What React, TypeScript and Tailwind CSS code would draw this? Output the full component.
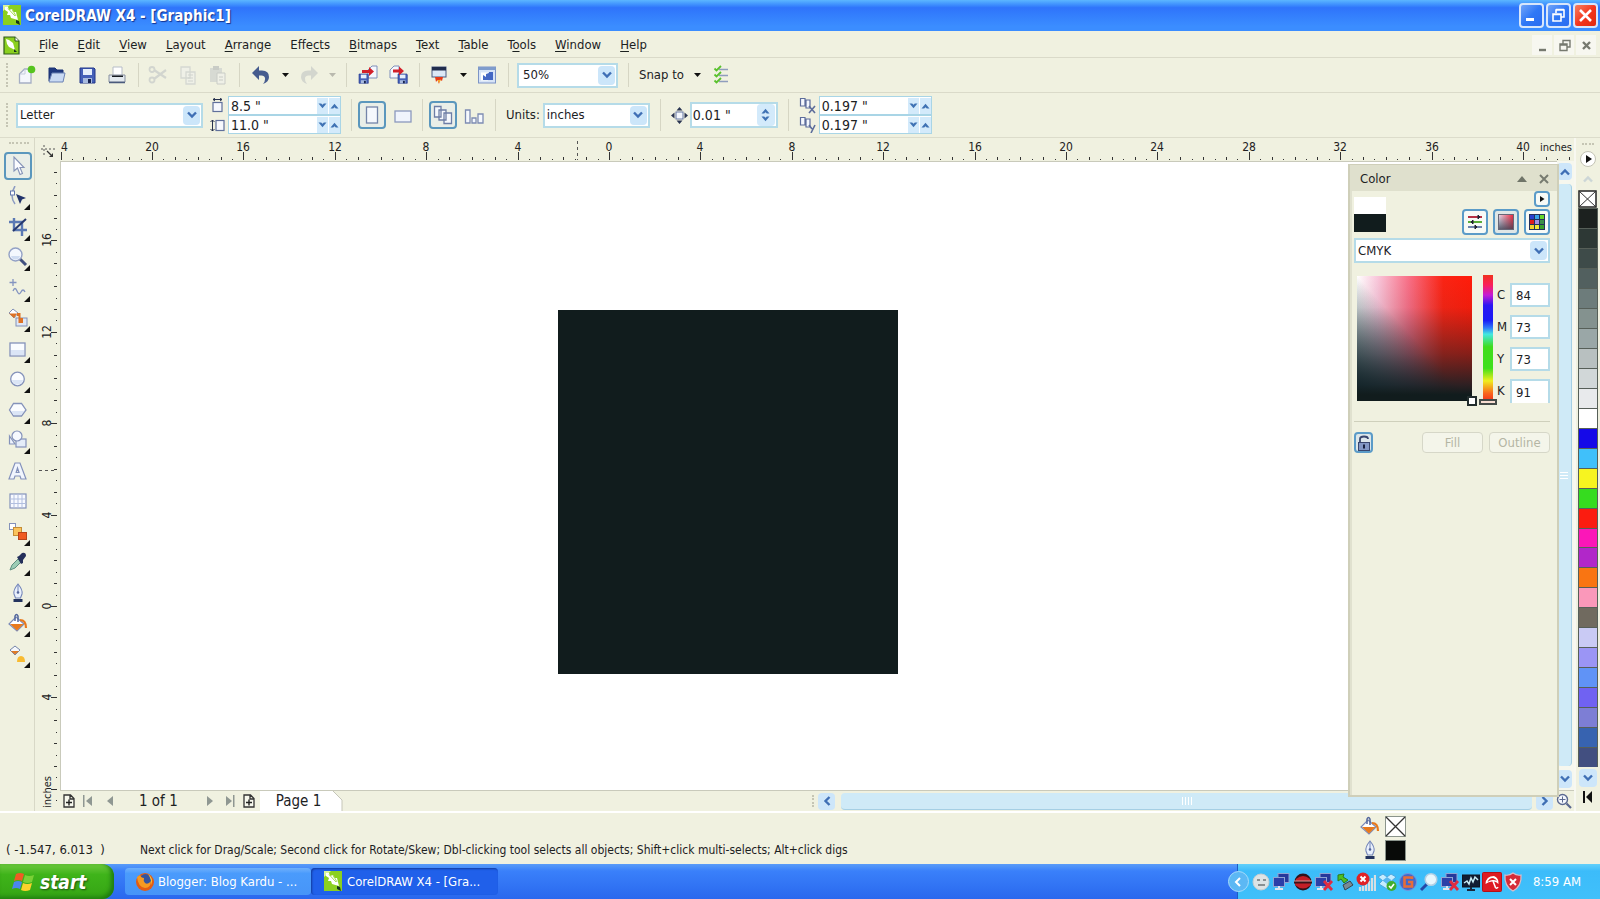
import React from "react";

type Kids = { children?: React.ReactNode };

/* ---------- small shared pieces ---------- */

function Icon({ w = 20, h = 20, children, className = "" }: Kids & { w?: number; h?: number; className?: string }) {
  return (
    <svg width={w} height={h} viewBox={`0 0 ${w} ${h}`} className={`block shrink-0 ${className}`} aria-hidden="true">
      {children}
    </svg>
  );
}

function Chevron({ up = false, small = false }: { up?: boolean; small?: boolean }) {
  if (small) {
    return (
      <Icon w={9} h={6}>
        <path d={up ? "M0.5 5.5 L4.5 0.8 L8.5 5.5 L5.8 5.5 L4.5 4.2 L3.2 5.5Z" : "M0.5 0.5 L4.5 5.2 L8.5 0.5 L5.8 0.5 L4.5 1.8 L3.2 0.5Z"} fill="#3f72b4" />
      </Icon>
    );
  }
  return (
    <Icon w={12} h={8}>
      <path d={up ? "M2 6.5 L6 2.5 L10 6.5" : "M2 1.5 L6 5.5 L10 1.5"} fill="none" stroke="#3f6fb5" strokeWidth="2.4" />
    </Icon>
  );
}

function Grip() {
  return <div className="mr-1 ml-1 h-6 w-0 shrink-0 border-l-2 border-dotted border-[#c5c5b4]" />;
}

function Sep({ tall = false }: { tall?: boolean }) {
  return <div className={`${tall ? "h-8" : "h-6"} w-px shrink-0 bg-[#d6d6c4]`} />;
}

function ToolButton({ label, className = "w-[30px]", disabled = false, children }: Kids & { label: string; className?: string; disabled?: boolean }) {
  return (
    <button aria-label={label} disabled={disabled} className={`flex h-7 shrink-0 items-center justify-center ${className}`}>
      {children}
    </button>
  );
}

function Combo({ label, value, options, className, pad = "pl-1" }: { label: string; value: string; options: string[]; className: string; pad?: string }) {
  return (
    <div className={`flex h-[25px] shrink-0 items-center border-2 border-[#b5dbe8] bg-white pr-px ${className}`}>
      <select aria-label={label} defaultValue={value} className={`min-w-0 flex-1 appearance-none bg-transparent outline-none ${pad}`}>
        {options.map((o) => (
          <option key={o}>{o}</option>
        ))}
      </select>
      <span className="flex h-[19px] w-[17px] items-center justify-center rounded-sm bg-[#cce6fa]">
        <Chevron />
      </span>
    </div>
  );
}

function SpinRow({ label, value }: { label: string; value: string }) {
  return (
    <div className="flex h-[19px] items-center border border-[#a9d5e6] bg-white">
      <input aria-label={label} defaultValue={value} className="w-0 min-w-0 flex-1 bg-transparent pl-0.5 text-[14px] outline-none" />
      <button aria-label={`${label} down`} className="mr-px flex h-4 w-[11px] items-center justify-center bg-[#d3eafb]">
        <Chevron small />
      </button>
      <button aria-label={`${label} up`} className="flex h-4 w-[11px] items-center justify-center bg-[#d3eafb]">
        <Chevron small up />
      </button>
    </div>
  );
}

function Triangle({ faint = false }: { faint?: boolean }) {
  return (
    <Icon w={7} h={4}>
      <path d="M0 0 H7 L3.5 4Z" fill={faint ? "#b9b9ae" : "#111"} />
    </Icon>
  );
}

function CorelLogo() {
  return (
    <Icon w={20} h={21}>
      <rect x="1" y="0" width="18" height="20" fill="#8bd01f" />
      <path d="M1 0 H8 L1 6Z" fill="#d9f59b" />
      <path d="M3 2 L6 2 L7 5 L10 4 L11 7 L14 7 L16 15 L9 13 L8 10 L5 10 L6 7 L3 5Z" fill="#fff" />
      <path d="M6 3.5 L13 11 M10 4 L14 11" stroke="#a9dd55" strokeWidth="1" />
      <path d="M14 15 L17 16 L18 20 L14 18Z" fill="#16351a" />
    </Icon>
  );
}

/* ---------- toolbar drawings ---------- */

const pageStroke = "#7f8fba";

function BucketShape() {
  return (
    <>
      <path d="M8 4 L16 11 L9 18 L1 11Z" fill="#fff" stroke="#7c8bb8" strokeWidth="1.2" />
      <path d="M2 11 H15.5 L9 17.5Z" fill="#e8791c" />
      <path d="M7 8 V3 Q8.500 0 10 3 V9" fill="none" stroke="#51659c" strokeWidth="1.5" />
      <path d="M12 7 Q18 7 18 15" fill="none" stroke="#e8791c" strokeWidth="2.2" />
    </>
  );
}

function PenShape() {
  return (
    <>
      <path d="M10 1 Q15 7 14 11 L12.500 15 H7.500 L6 11 Q5 7 10 1Z" fill="#e9f0fc" stroke="#7385b8" strokeWidth="1.1" />
      <path d="M10 2 V9" stroke="#7385b8" />
      <circle cx="10" cy="9.500" r="1.300" fill="#53659b" />
      <path d="M5.500 16 H14.500 V19 H5.500Z" fill="#24345f" />
    </>
  );
}

const Undo = ({ faint = false }: { faint?: boolean }) => (
  <Icon w={20} h={20}>
    <g transform={faint ? "translate(20 0) scale(-1 1)" : undefined}>
      <path d="M1 8 L8 1 V5.500 H11 Q18 5.500 18 12 Q18 17 12 19 Q14.500 16 14 13 Q13.500 10.500 10.500 10.500 H8 V15Z" fill={faint ? "#d3d6ce" : "#465c8e"} />
    </g>
  </Icon>
);

const Floppy = ({ x = 0, y = 0, s = 1 }: { x?: number; y?: number; s?: number }) => (
  <g transform={`translate(${x} ${y}) scale(${s})`}>
    <path d="M0 0 H14 L15 1 V15 H0Z" fill="#4560b8" stroke="#22368a" />
    <rect x="3" y="1" width="9" height="6" fill="#e6effb" />
    <rect x="3" y="10" width="9" height="5" fill="#a9bbdf" />
    <rect x="8" y="11" width="3" height="4" fill="#16224f" />
  </g>
);

function StandardBar() {
  return (
    <div className="flex h-[35px] items-center border-b border-[#dadac9] pl-0.5">
      <Grip />
      <ToolButton label="New">
        <Icon>
          <path d="M2.500 18 V9 L7.500 4 H14 V18Z" fill="#f4f7fc" stroke="#a5aec4" strokeWidth="1.300" />
          <path d="M3 9 H8 V4.500" fill="none" stroke="#c5ccdc" />
          <circle cx="14.500" cy="4.500" r="3.800" fill="#56c41f" />
        </Icon>
      </ToolButton>
      <ToolButton label="Open">
        <Icon>
          <path d="M2 16 V3 H8 L10 5 H16 V8" fill="#1f3a80" stroke="#1c3274" />
          <path d="M2 17 L5 8 H18 L16 17Z" fill="#c9daf3" stroke="#6b82b4" />
        </Icon>
      </ToolButton>
      <ToolButton label="Save">
        <Icon>
          <Floppy x={3} y={3} />
        </Icon>
      </ToolButton>
      <ToolButton label="Print">
        <Icon>
          <path d="M6 11 V2 H15 V11" fill="#fff" stroke="#b7bdc8" />
          <path d="M2 10 H18 V17 H2Z" fill="#e3e9ee" stroke="#8890a0" />
          <path d="M5 10.500 H16 V12 H5Z" fill="#171c22" />
          <path d="M2 17.500 H18" stroke="#4a5a7c" strokeWidth="1.500" />
        </Icon>
      </ToolButton>
      <div className="w-1.5" />
      <Sep />
      <div className="w-1" />
      <ToolButton label="Cut" disabled>
        <Icon>
          <path d="M6 5 L18 13 M6 14 L18 5" stroke="#d2d5cf" strokeWidth="2.200" />
          <circle cx="4" cy="4.500" r="2.500" fill="none" stroke="#d2d5cf" strokeWidth="1.800" />
          <circle cx="4" cy="15" r="2.500" fill="none" stroke="#d2d5cf" strokeWidth="1.800" />
        </Icon>
      </ToolButton>
      <ToolButton label="Copy" disabled>
        <Icon>
          <path d="M3 2 H12 V13 H3Z M8 7 H17 V19 H8Z" fill="#eff0e7" stroke="#d5d8d2" strokeWidth="1.300" />
          <path d="M10 10 H15 M10 13 H15 M10 16 H15" stroke="#d0d3cd" />
        </Icon>
      </ToolButton>
      <ToolButton label="Paste" disabled>
        <Icon>
          <path d="M2 3 H14 V17 H2Z" fill="#d7dad3" />
          <path d="M5 1 H11 V5 H5Z" fill="#c9ccc6" />
          <path d="M9 8 H17 V19 H9Z" fill="#eff0e7" stroke="#c9ccc6" />
          <path d="M11 12 H15 M11 15 H15" stroke="#c9ccc6" />
        </Icon>
      </ToolButton>
      <div className="w-1.5" />
      <Sep />
      <div className="w-1.5" />
      <ToolButton label="Undo">
        <Undo />
      </ToolButton>
      <ToolButton label="Undo list" className="w-[18px]">
        <Triangle />
      </ToolButton>
      <ToolButton label="Redo" disabled>
        <Undo faint />
      </ToolButton>
      <ToolButton label="Redo list" className="w-4" disabled>
        <Triangle faint />
      </ToolButton>
      <div className="w-1.5" />
      <Sep />
      <div className="w-1.5" />
      <ToolButton label="Import">
        <Icon>
          <path d="M10 5 L14 1 H19 V13 H10Z" fill="#f4f7fd" stroke={pageStroke} />
          <Floppy x={1} y={9} s={0.62} />
          <path d="M4 8 V5 H11 V2 L16 6.500 L11 11 V8Z" fill="#d3202a" />
        </Icon>
      </ToolButton>
      <ToolButton label="Export">
        <Icon>
          <path d="M2 5 L6 1 H11 V13 H2Z" fill="#f4f7fd" stroke={pageStroke} />
          <Floppy x={10} y={9} s={0.62} />
          <path d="M5 7.500 V4.500 H11 V1.500 L16 6 L11 10.500 V7.500Z" fill="#d3202a" />
        </Icon>
      </ToolButton>
      <div className="w-1.5" />
      <Sep />
      <div className="w-1" />
      <ToolButton label="Application launcher">
        <Icon>
          <rect x="3" y="2" width="14" height="10" fill="#dce8f6" stroke="#4b5a82" />
          <rect x="3" y="2" width="14" height="3.500" fill="#202c4d" />
          <path d="M6 12 H14 L13 16 L11 14.500 L10 19 L8.500 15 L7 17Z" fill="#e63a17" />
          <path d="M8.500 15 H12 L10 18Z" fill="#f7a82a" />
        </Icon>
      </ToolButton>
      <ToolButton label="Launcher list" className="w-[18px]">
        <Triangle />
      </ToolButton>
      <ToolButton label="Welcome screen">
        <Icon>
          <rect x="1.500" y="2" width="17" height="16" fill="#d7e4f7" stroke="#7c94c6" />
          <rect x="1.500" y="2" width="17" height="3" fill="#7f9ccc" />
          <rect x="4" y="7.500" width="7" height="8" fill="#fff" />
          <path d="M6 14 V10 L9 12 V9 L12 8 V7 H16 V15 H6Z" fill="#4468c4" />
        </Icon>
      </ToolButton>
      <div className="w-1.5" />
      <Sep />
      <Combo label="Zoom level" value="50%" options={["50%", "100%", "200%"]} className="ml-2 w-[101px]" />
      <div className="w-2.5" />
      <Sep />
      <button className="ml-2.5 flex items-center gap-2.5">
        Snap to
        <Triangle />
      </button>
      <ToolButton label="Options" className="ml-1.5 w-7">
        <Icon w={16}>
          <path d="M6 4.500 H15 M6 10.500 H15 M6 16.500 H15" stroke="#8f9dbd" strokeWidth="1.400" />
          <path d="M1.500 3.500 L3.500 5.500 L8 1 M1.500 9.500 L3.500 11.500 L8 7 M1.500 15.500 L3.500 17.500 L8 13" fill="none" stroke="#59c12c" strokeWidth="1.800" />
        </Icon>
      </ToolButton>
    </div>
  );
}

const pressed = "rounded border-2 border-[#5b97bd] bg-[#e9eee8]";

function PropertyBar() {
  return (
    <div className="flex h-[45px] items-center border-b border-[#dcdccb] pl-0.5">
      <Grip />
      <Combo label="Paper type" value="Letter" options={["Letter", "Legal", "A4"]} className="ml-1 w-[187px]" pad="pl-0.5" />
      <div className="ml-1.5 flex w-[17px] shrink-0 flex-col items-center gap-1.5">
        <Icon w={15} h={15}>
          <path d="M3 1.500 H12 M3 1.500 l2 -1.500 M3 1.500 l2 1.500 M12 1.500 l-2 -1.500 M12 1.500 l-2 1.500" stroke="#26314e" />
          <rect x="3" y="4.500" width="9" height="9" fill="#f6f8fd" stroke="#60709b" strokeWidth="1.200" />
        </Icon>
        <Icon w={15} h={13}>
          <path d="M2.500 1 V12 M0.500 3 L2.500 1 L4.500 3 M0.500 10 L2.500 12 L4.500 10" fill="none" stroke="#26314e" />
          <rect x="6" y="1.500" width="8" height="10" fill="#f6f8fd" stroke="#60709b" strokeWidth="1.200" />
        </Icon>
      </div>
      <div className="ml-0.5 flex w-[113px] shrink-0 flex-col">
        <SpinRow label="Page width" value={'8.5 "'} />
        <SpinRow label="Page height" value={'11.0 "'} />
      </div>
      <div className="w-2.5" />
      <Sep tall />
      <ToolButton label="Portrait" className={`ml-1.5 w-7 ${pressed}`}>
        <Icon>
          <rect x="4.500" y="2" width="11" height="16" fill="#f5f8fd" stroke="#7484a9" strokeWidth="1.300" />
        </Icon>
      </ToolButton>
      <ToolButton label="Landscape" className="ml-0.5 w-[30px]">
        <Icon>
          <rect x="2" y="6" width="16" height="11" fill="#f0f4fc" stroke="#8b99bd" strokeWidth="1.300" />
        </Icon>
      </ToolButton>
      <div className="w-1" />
      <Sep tall />
      <ToolButton label="All pages" className={`ml-1.5 w-7 ${pressed}`}>
        <Icon>
          <path d="M1.500 1.500 H8 V12 H1.500Z M6 5 H13 V15 H6Z M11 8 H18.500 V18.500 H11Z" fill="#f5f8fd" stroke="#6d7da6" strokeWidth="1.300" />
        </Icon>
      </ToolButton>
      <ToolButton label="Current page" className="ml-0.5 w-[30px]">
        <Icon>
          <path d="M1.500 5 H6 V18 H1.500Z M8 13 H12 V18 H8Z M14 9 H19 V18 H14Z" fill="#f5f8fd" stroke="#7d8cb3" strokeWidth="1.300" />
        </Icon>
      </ToolButton>
      <div className="w-1.5" />
      <Sep tall />
      <label className="ml-2.5 flex items-center gap-[3px]">
        Units:
        <Combo label="Units" value="inches" options={["inches", "points", "millimeters"]} className="w-[107px]" pad="pl-0.5" />
      </label>
      <div className="w-2.5" />
      <Sep tall />
      <Icon w={17} h={17} className="ml-2.5">
        <path d="M8.500 0 L11.500 3.500 H5.500Z M8.500 17 L11.500 13.500 H5.500Z M0 8.500 L3.500 5.500 V11.500Z M17 8.500 L13.500 5.500 V11.500Z" fill="#2a3552" />
        <rect x="5" y="5" width="7" height="7" fill="#f4f7fd" stroke="#6576a2" />
      </Icon>
      <div className="ml-0.5 flex h-[26px] w-[88px] shrink-0 items-center border-2 border-[#b5dbe8] bg-white">
        <input aria-label="Nudge distance" defaultValue={'0.01 "'} className="w-0 min-w-0 flex-1 bg-transparent pl-px text-[14px] outline-none" />
        <span className="mr-px flex h-[22px] w-[18px] flex-col items-center justify-between rounded-sm bg-[#d3eafb] py-1">
          <button aria-label="Increase nudge">
            <Chevron small up />
          </button>
          <button aria-label="Decrease nudge">
            <Chevron small />
          </button>
        </span>
      </div>
      <div className="w-2.5" />
      <Sep tall />
      <div className="ml-2.5 flex w-5 shrink-0 flex-col gap-0.5">
        {["X", "Y"].map((axis) => (
          <Icon key={axis} w={18} h={17}>
            <path d="M1.500 1.500 H6 V9 H1.500Z M7 3 H11 V11 H7Z" fill="#f5f8fd" stroke="#5d6d9b" strokeWidth="1.200" />
            <path d={axis === "X" ? "M10 9 L16 16 M16 9 L10 16" : "M10 9 L13 13 M16 9 L12 17"} stroke="#5d6d9b" strokeWidth="1.600" />
          </Icon>
        ))}
      </div>
      <div className="flex w-[113px] shrink-0 flex-col">
        <SpinRow label="Duplicate X" value={'0.197 "'} />
        <SpinRow label="Duplicate Y" value={'0.197 "'} />
      </div>
    </div>
  );
}

/* ---------- title and menu ---------- */

function WindowButton({ label, close = false, children }: Kids & { label: string; close?: boolean }) {
  return (
    <button
      aria-label={label}
      className={`flex h-[25px] w-[25px] items-center justify-center rounded border-2 border-[#d7e6fb] ${
        close ? "bg-linear-to-br from-[#f47c5e] via-[#f4351c] to-[#e02a10]" : "bg-linear-to-br from-[#6fa3f8] via-[#2f78f6] to-[#2b6cf0]"
      }`}
    >
      <Icon w={17} h={17}>
        {children}
      </Icon>
    </button>
  );
}

function TitleBar() {
  return (
    <header className="flex h-[31px] items-center bg-linear-to-b from-[#5cb6ff] via-[#2f74fb] via-25% to-[#3b8dff] to-85% pr-0.5 pl-0.5">
      <CorelLogo />
      <h1 className="ml-[3px] flex-1 text-[15px] font-bold text-white [text-shadow:1px_1px_1px_#12328f]">CorelDRAW X4 - [Graphic1]</h1>
      <div className="flex gap-0.5">
        <WindowButton label="Minimize">
          <path d="M3 12.500 H11" stroke="#fff" strokeWidth="3" />
        </WindowButton>
        <WindowButton label="Restore">
          <path d="M6 6 V3 H14 V10 H11 M6 2.500 H14" fill="none" stroke="#fff" strokeWidth="1.600" />
          <path d="M3 7 H11 V14 H3Z M3 7.500 H11" fill="none" stroke="#fff" strokeWidth="1.600" />
        </WindowButton>
        <WindowButton label="Close" close>
          <path d="M3 3 L14 14 M14 3 L3 14" stroke="#fff" strokeWidth="2.600" />
        </WindowButton>
      </div>
    </header>
  );
}

const menus: [string, string, string][] = [
  ["", "F", "ile"],
  ["", "E", "dit"],
  ["", "V", "iew"],
  ["", "L", "ayout"],
  ["", "A", "rrange"],
  ["Effe", "c", "ts"],
  ["", "B", "itmaps"],
  ["", "T", "ext"],
  ["", "T", "able"],
  ["T", "o", "ols"],
  ["", "W", "indow"],
  ["", "H", "elp"],
];

function MenuBar() {
  return (
    <nav className="flex h-[27px] items-center border-b border-[#dadac9] pt-0.5 pr-1 pl-[3px]">
      <Icon w={17} h={19}>
        <path d="M1 1 H12 L16 5 V18 H1Z" fill="#8bd01f" stroke="#2f5a1c" strokeWidth="1.200" />
        <path d="M12 1 V5 H16" fill="#fff" stroke="#2f5a1c" />
        <path d="M3 3 L6 4 L10 7 L12 14 L6 11 L4 8Z" fill="#fff" />
        <path d="M11 13 L14 16 L11 16Z" fill="#16351a" />
      </Icon>
      <div className="ml-[9px] flex flex-1">
        {menus.map(([pre, key, post]) => (
          <button key={pre + key + post} className="pr-[9px] pl-2.5">
            {pre}
            <span className="underline underline-offset-2">{key}</span>
            {post}
          </button>
        ))}
      </div>
      <div className="flex gap-0.5">
        {["M5 13 H12", "M7 7 V3.500 H14 V10 H11 M4 7 H11 V13.500 H4Z M4 8 H11", "M5 5 L12 12 M12 5 L5 12"].map((d, i) => (
          <button key={d} aria-label={["Minimize document", "Restore document", "Close document"][i]} className="flex h-5 w-5 items-center justify-center bg-[#f7f7f0]">
            <Icon w={17} h={17}>
              <path d={d} fill="none" stroke="#76796f" strokeWidth={i === 1 ? 1.4 : 2.4} />
            </Icon>
          </button>
        ))}
      </div>
    </nav>
  );
}

/* ---------- toolbox ---------- */

const tools: { name: string; flyout?: boolean; art: React.ReactNode }[] = [
  { name: "Pick", art: <path d="M6 1 V15 L9.500 12 L12 18.500 L14.500 17.500 L12 11.500 H16Z" fill="#fbfcff" stroke="#8593b7" strokeWidth="1.100" /> },
  {
    name: "Shape",
    flyout: true,
    art: (
      <>
        <path d="M7 0 Q1 10 7 18" fill="none" stroke="#8c9bc2" strokeWidth="1.500" />
        <rect x="2.500" y="5" width="4" height="4" fill="#fff" stroke="#6478ad" />
        <path d="M8 8 L18 12 L14 13.500 L12 18Z" fill="#22336b" />
      </>
    ),
  },
  {
    name: "Crop",
    flyout: true,
    art: (
      <>
        <path d="M6 1 V13 H19 M1 5 H14 V19" fill="none" stroke="#5b79b4" strokeWidth="2.400" />
        <path d="M18 2 L5 14" stroke="#26386f" strokeWidth="2" />
      </>
    ),
  },
  {
    name: "Zoom",
    flyout: true,
    art: (
      <>
        <path d="M12 12 L18 18" stroke="#43527f" strokeWidth="3" />
        <circle cx="7.500" cy="7.500" r="6.500" fill="#f4f8fe" stroke="#93a1c5" strokeWidth="1.400" />
        <path d="M3 9 H12 Q11 12.500 7.500 12.500 Q4 12.500 3 9Z" fill="#cfdcf1" />
      </>
    ),
  },
  {
    name: "Freehand",
    flyout: true,
    art: <path d="M5 1 V8 M1.500 4.500 H8.500 M5 13 Q7 8 9 13 T13 14 T17 14" fill="none" stroke="#8494c0" strokeWidth="1.300" />,
  },
  {
    name: "Smart fill",
    flyout: true,
    art: (
      <>
        <rect x="8" y="10" width="11" height="8" fill="#dfe7f5" stroke="#8291b8" />
        <path d="M5 1 L10 5 L6 10 L1 5Z" fill="#fff" stroke="#8291b8" />
        <path d="M1 5.500 H9 L6 10Z M9 5 H12.500 V10 H15 V15 H10.500 V8 H9Z" fill="#dd7224" />
      </>
    ),
  },
  { name: "Rectangle", flyout: true, art: <><rect x="2" y="4" width="15" height="13" fill="#fafcff" stroke="#8492ba" strokeWidth="1.300" /><rect x="3" y="11" width="13" height="5" fill="#dbe5f6" /></> },
  { name: "Ellipse", flyout: true, art: <><circle cx="9.500" cy="10" r="6.800" fill="#fafcff" stroke="#8492ba" strokeWidth="1.300" /><path d="M4 11 H15 Q14 15.500 9.500 15.500 Q5 15.500 4 11Z" fill="#dbe5f6" /></> },
  { name: "Polygon", flyout: true, art: <><path d="M5.500 3.500 H13.500 L18 10 L13.500 16 H5.500 L1.500 10Z" fill="#fafcff" stroke="#8492ba" strokeWidth="1.300" /><path d="M3 11 H16.500 L13 15 H6Z" fill="#dbe5f6" /></> },
  {
    name: "Basic shapes",
    flyout: true,
    art: (
      <>
        <path d="M1.500 6 L7 14 H1.500Z" fill="#eef3fc" stroke="#8492ba" strokeWidth="1.200" />
        <rect x="8" y="9" width="10" height="8" fill="#e4ecf9" stroke="#8492ba" strokeWidth="1.200" />
        <circle cx="9" cy="6" r="5" fill="#f6f9fe" stroke="#8492ba" strokeWidth="1.200" />
      </>
    ),
  },
  { name: "Text", art: <path fillRule="evenodd" d="M7 2 H12 L18 18 H13 L12 15 H7 L6 18 H1Z M9.500 7 L8.200 11.500 H11Z" fill="#f1f5fd" stroke="#8391bb" strokeWidth="1.200" /> },
  {
    name: "Table",
    art: (
      <>
        <rect x="2" y="3" width="16" height="14" fill="#f8faff" stroke="#8492ba" strokeWidth="1.200" />
        <path d="M6 3 V17 M10 3 V17 M14 3 V17 M2 8 H18 M2 12.500 H18" stroke="#b2bfdf" />
      </>
    ),
  },
  {
    name: "Interactive blend",
    flyout: true,
    art: (
      <>
        <rect x="1.500" y="1.500" width="6" height="6" fill="#fff" stroke="#8492ba" />
        <rect x="5.500" y="5.500" width="8" height="8" fill="#fac35c" stroke="#c58d35" />
        <rect x="10.500" y="10.500" width="8" height="7" fill="#ef5a22" stroke="#b8431a" />
      </>
    ),
  },
  {
    name: "Eyedropper",
    flyout: true,
    art: (
      <>
        <path d="M2 18 L4 13 L10 7 L13 10 L7 16Z" fill="#9dcdb5" stroke="#5e8f80" />
        <path d="M9 5 L11 4 L14 1 Q18 0 18 4 L15 8 V11 L13 12Z" fill="#242f5a" />
      </>
    ),
  },
  { name: "Outline", flyout: true, art: <PenShape /> },
  { name: "Fill", flyout: true, art: <BucketShape /> },
  {
    name: "Interactive fill",
    flyout: true,
    art: (
      <>
        <path d="M7 2 L12 6 L7 11 L2 6Z" fill="#f4f7fc" stroke="#7585aa" />
        <path d="M3 7 H11 L7 10.500Z" fill="#df7a25" />
        <path d="M9 18 Q9 12 13 12 Q17 12 17 18Z" fill="#f8bb32" />
      </>
    ),
  },
];

function Toolbox() {
  return (
    <aside className="flex w-[35px] shrink-0 flex-col border-r border-[#d8d8c7] pl-1">
      <div className="mx-auto mt-1 mb-2 h-0 w-5 border-t-2 border-dotted border-[#c5c5b4]" />
      {tools.map((t, i) => (
        <div key={t.name} className={`flex h-7 shrink-0 items-center ${i % 2 ? "mb-[3px]" : "mb-0.5"}`}>
          <button aria-label={t.name} className={`relative flex h-7 w-7 items-center justify-center ${i === 0 ? pressed : ""}`}>
            <Icon>{t.art}</Icon>
            {t.flyout && (
              <svg width="6" height="6" viewBox="0 0 6 6" className="absolute right-0.5 bottom-0">
                <path d="M6 0 V6 H0Z" fill="#111" />
              </svg>
            )}
          </button>
        </div>
      ))}
    </aside>
  );
}

/* ---------- rulers ---------- */

const UNIT = 91.4 / 8;

function HorizontalRuler() {
  const origin = 549;
  const ticks = [];
  for (let i = -48; i <= 84; i++) {
    const x = Math.round(origin + i * UNIT);
    const len = i % 8 === 0 ? 8 : i % 2 === 0 ? 3 : 1;
    ticks.push(<rect key={i} x={x} y={22 - len} width="1" height={len} fill="#333" />);
  }
  const labels = [];
  for (let v = -20; v <= 40; v += 4) {
    labels.push(
      <text key={v} x={Math.round(origin + v * UNIT * 2)} y="13" textAnchor="middle">
        {Math.abs(v)}
      </text>,
    );
  }
  return (
    <svg className="block h-[23px] w-full text-[12px]" fill="#222">
      {ticks}
      {labels}
      <text x="1" y="13">4</text>
      <text x="1480" y="13" className="text-[11px]">inches</text>
      <path d="M517.500 3 V22" stroke="#555" strokeDasharray="3 3" />
    </svg>
  );
}

function VerticalRuler() {
  const origin = 444;
  const ticks = [];
  for (let i = -38; i <= 18; i++) {
    const y = Math.round(origin + i * UNIT);
    const len = i % 8 === 0 ? 6 : i % 2 === 0 ? 3 : 1;
    ticks.push(<rect key={i} x={22 - len} y={y} width={len} height="1" fill="#333" />);
  }
  return (
    <svg className="block min-h-0 w-6 flex-1 text-[12px]" fill="#222">
      {ticks}
      {[-16, -12, -8, -4, 0, 4].map((v) => (
        <text key={v} textAnchor="middle" transform={`translate(16 ${Math.round(origin + v * UNIT * 2)}) rotate(-90)`}>
          {Math.abs(v)}
        </text>
      ))}
      <text textAnchor="middle" transform="translate(16 630) rotate(-90)" className="text-[11px]">inches</text>
      <path d="M4 308.500 H22" stroke="#555" strokeDasharray="3 3" />
    </svg>
  );
}

/* ---------- colour docker ---------- */

function ModeButton({ label, active = false, children }: Kids & { label: string; active?: boolean }) {
  return (
    <button aria-label={label} className={`flex h-[26px] w-[26px] items-center justify-center rounded border-2 border-[#5b9bc8] ${active ? "bg-[#dfe6e6]" : "bg-[#f8faf6]"}`}>
      <Icon w={18} h={18}>{children}</Icon>
    </button>
  );
}

const gridColours = ["#2a3fd0", "#36a2e8", "#67d629", "#df1d1d", "#a48fe3", "#3b8f4a", "#f3d42a", "#f0e93a", "#3aa02c"];

function ColorDocker() {
  return (
    <section className="absolute top-0.5 right-[-2px] bottom-[-7px] z-10 flex w-[211px] flex-col border-2 border-t border-[#cfcfb9] bg-[#f0f1e0]">
      <div className="flex h-[26px] shrink-0 items-center bg-[#dfe0cd] pt-0.5 pr-2 pl-2.5">
        <h2 className="flex-1">Color</h2>
        <button aria-label="Collapse" className="mr-3">
          <Icon w={10} h={6}>
            <path d="M0 6 L5 0 L10 6Z" fill="#6f7468" />
          </Icon>
        </button>
        <button aria-label="Close docker">
          <Icon w={10} h={10}>
            <path d="M1 1 L9 9 M9 1 L1 9" stroke="#777b70" strokeWidth="2" />
          </Icon>
        </button>
      </div>
      <div className="flex flex-1 flex-col border-l-2 border-[#e0e1cf] pr-[7px] pl-0.5">
        <div className="flex h-[44px] items-end justify-between">
          <div className="mb-[3px] w-8">
            <div className="h-[17px] bg-white" />
            <div className="h-[18px] bg-[#111c1d]" />
          </div>
          <div className="flex flex-col items-end gap-0.5">
            <button aria-label="Docker options" className="flex h-4 w-4 items-center justify-center rounded border-2 border-[#5b9bc8] bg-[#f8faf6]">
              <Icon w={5} h={6}>
                <path d="M0 0 L4.500 3 L0 6Z" fill="#111" />
              </Icon>
            </button>
            <div className="flex gap-[5px]">
              <ModeButton label="Sliders">
                <path d="M2 4 H16" stroke="#b53145" strokeWidth="2" />
                <path d="M2 9 H16" stroke="#5aad3a" strokeWidth="2" />
                <path d="M2 14 H16" stroke="#7083ad" strokeWidth="2" />
                <path d="M12 2 L14 4 L12 6Z M7 7 V11 L5 9Z M9 12 L11 14 L9 16Z" fill="#223" stroke="#223" />
              </ModeButton>
              <ModeButton label="Viewer" active>
                <defs>
                  <linearGradient id="viewer" x1="0" y1="0.300" x2="1" y2="0">
                    <stop offset="0" stopColor="#eef" />
                    <stop offset="1" stopColor="#fa2038" />
                  </linearGradient>
                  <linearGradient id="viewerShade" x1="0" y1="0" x2="0" y2="1">
                    <stop offset="0" stopColor="#223" stopOpacity="0" />
                    <stop offset="1" stopColor="#334" stopOpacity="0.8" />
                  </linearGradient>
                </defs>
                <rect x="1.500" y="1.500" width="15" height="15" fill="url(#viewer)" />
                <rect x="1.500" y="1.500" width="15" height="15" fill="url(#viewerShade)" stroke="#667" />
              </ModeButton>
              <ModeButton label="Palettes">
                <rect x="1" y="1" width="16" height="16" fill="#23305c" />
                {gridColours.map((c, i) => (
                  <rect key={c} x={2 + (i % 3) * 5} y={2 + Math.floor(i / 3) * 5} width="4" height="4" fill={c} />
                ))}
              </ModeButton>
            </div>
          </div>
        </div>
        <Combo label="Color model" value="CMYK" options={["CMYK", "RGB", "HSB"]} className="mt-[3px] w-full" pad="pl-0.5" />
        <div className="mt-3 flex">
          <div className="relative mt-px ml-[3px] h-[125px] w-[115px] bg-[linear-gradient(to_right,#ffffff_0%,#f9c6da_18%,#f96f86_45%,#fb2414_75%,#ff1c0a_100%)]">
            <div className="h-full bg-[linear-gradient(to_bottom,#11202500_0%,#11202510_25%,#11202580_62%,#112025e0_87%,#111c1d_95%),linear-gradient(to_top_right,#314d55ff_5%,#314d5500_50%)]" />
            <span className="absolute right-[-5px] bottom-[-5px] h-2.5 w-2.5 border-2 border-[#222d2d] bg-white" />
          </div>
          <div className="relative ml-[11px] h-[126px] w-2.5 bg-[linear-gradient(to_bottom,#f0321e_0%,#fa1f5a_8%,#c41bd6_16%,#2b16f2_24%,#1a1cf5_36%,#2f7af8_42%,#44e8e0_47%,#40dc1c_57%,#3fe01c_74%,#f0ee20_84%,#f9641c_94%,#f0321e_100%)]">
            <span className="absolute bottom-[-4px] left-[-4px] h-1.5 w-[18px] border-2 border-[#444a48] bg-[#f8ddd2]" />
          </div>
          <div className="ml-1 flex flex-1 flex-col gap-2 pt-2">
            {[["C", 84], ["M", 73], ["Y", 73], ["K", 91]].map(([k, v]) => (
              <label key={k} className="flex items-center">
                <span className="flex-1">{k}</span>
                <input defaultValue={v} className={`h-6 w-[40px] border-2 border-[#b5dbe8] bg-white pl-1 outline-none ${k === "K" ? "border-b-0" : ""}`} />
              </label>
            ))}
          </div>
        </div>
        <div className="mt-[18px] border-t border-[#cfd0bc]" />
        <div className="mt-2.5 flex items-center">
          <button aria-label="Lock" className="flex h-[21px] w-[19px] items-center justify-center rounded border-2 border-[#5b9bc8] bg-[#dce6ea]">
            <Icon w={14} h={16}>
              <path d="M3 8 V4 Q3 1.500 7 1.500 Q11 1.500 11 4" fill="none" stroke="#39466e" strokeWidth="1.800" />
              <rect x="1.500" y="7.500" width="11" height="8" fill="#8397c4" stroke="#39466e" />
              <path d="M7 9.500 V13.500" stroke="#17203f" strokeWidth="2" />
            </Icon>
          </button>
          <div className="flex-1" />
          <button disabled className="mr-1.5 h-[21px] w-[61px] rounded-sm border border-[#d6d7c8] bg-[#f4f5ea] text-[#b4b5a4]">Fill</button>
          <button disabled className="h-[21px] w-[61px] rounded-sm border border-[#d6d7c8] bg-[#f4f5ea] text-[#b4b5a4]">Outline</button>
        </div>
      </div>
    </section>
  );
}

/* ---------- right side ---------- */

function ScrollColumn() {
  return (
    <div className="flex w-[17px] shrink-0 flex-col bg-[#f6f7ee] pt-0.5 pr-0.5 pb-0.5">
      <button aria-label="Scroll up" className="flex h-[17px] items-center justify-center rounded-sm bg-[#cde6fa]">
        <Chevron up />
      </button>
      <div className="mt-1 flex flex-1 flex-col items-center justify-center gap-0.5 rounded-sm border-r border-[#a5cfe4] bg-[#cfeaf7]">
        {[0, 1, 2].map((i) => (
          <span key={i} className="h-px w-2 bg-white" />
        ))}
      </div>
      <button aria-label="Scroll down" className="mt-1 flex h-[18px] items-center justify-center rounded-sm bg-[#cde6fa]">
        <Chevron />
      </button>
    </div>
  );
}

const swatches = [
  "#1c211f", "#2d3835", "#3e4b49", "#52605f", "#6d7c7b", "#84928f", "#9aa7a7", "#b8c0c0", "#d1d7d8", "#e8eaec",
  "#ffffff", "#1509e8", "#40c0fa", "#f7f420", "#36dc1f", "#fb1c10", "#fb17b8", "#b127c9", "#f97512", "#fa98ba",
  "#706a5f", "#c9caf4", "#9b95f5", "#6093f6", "#7062f2", "#7d7ed5", "#3763b0", "#424f80",
];

function Palette() {
  return (
    <aside className="flex w-[26px] shrink-0 flex-col items-center border-l-2 border-[#f8f8f1] pt-[5px] pr-0.5 pl-0.5">
      <div className="h-0 w-3 border-t-2 border-dotted border-[#c5c5b4]" />
      <button aria-label="Palette options" className="mt-1.5 flex h-4 w-4 items-center justify-center rounded-full border border-[#c3c3b6] bg-white">
        <Icon w={7} h={8}>
          <path d="M1 0 L7 4 L1 8Z" fill="#111" />
        </Icon>
      </button>
      <div className="flex h-[23px] items-center opacity-20">
        <Chevron up />
      </div>
      <div className="flex min-h-0 w-5 flex-1 flex-col">
        <button aria-label="No color" className="h-[18px] shrink-0">
          <Icon w={20} h={18}>
            <rect x="1" y="1" width="17" height="16" fill="#fff" stroke="#222" strokeWidth="1.500" />
            <path d="M1 1 L18 17 M18 1 L1 17" stroke="#333" />
          </Icon>
        </button>
        {swatches.map((c) => (
          <button key={c} aria-label={c} className="flex-1 border border-b-0 border-[#565f58]" style={{ backgroundColor: c }} />
        ))}
      </div>
      <button aria-label="Palette down" className="mt-0.5 flex h-[18px] w-[18px] items-center justify-center rounded-sm bg-[#cde6fa]">
        <Chevron />
      </button>
      <button aria-label="Expand palette" className="flex h-6 items-center pb-1">
        <Icon w={10} h={12}>
          <path d="M1 0 V12" stroke="#111" strokeWidth="2" />
          <path d="M9 0 L3 6 L9 12Z" fill="#111" />
        </Icon>
      </button>
    </aside>
  );
}

/* ---------- page bar ---------- */

function NavIcon({ label, d, bar }: { label: string; d: string; bar?: number }) {
  return (
    <button aria-label={label} className="flex h-5 w-5 items-center justify-center">
      <Icon w={10} h={12}>
        <path d={d} fill="#8f9792" />
        {bar !== undefined && <rect x={bar} y="0" width="1.500" height="12" fill="#8f9792" />}
      </Icon>
    </button>
  );
}

function AddPage() {
  return (
    <button aria-label="Add page" className="flex h-5 w-[18px] items-center justify-center">
      <Icon w={12} h={14}>
        <path d="M1 1 H7.500 L11 4.500 V13 H1Z M7 1 V5 H11" fill="#f7f8ee" stroke="#333" strokeWidth="1.300" />
        <path d="M3 8.500 H9 M6 5.500 V11.500" stroke="#222" strokeWidth="1.400" />
      </Icon>
    </button>
  );
}

function PageBar() {
  return (
    <div className="flex h-[21px] shrink-0 items-center border-t border-[#c9cabb]">
      <div className="flex w-[752px] shrink-0 items-center">
        <AddPage />
        <NavIcon label="First page" d="M9 1 V11 L3 6Z" bar={0} />
        <div className="w-0.5" />
        <NavIcon label="Previous page" d="M8 1 V11 L2 6Z" />
        <span className="flex-none pr-[22px] pl-[19px] text-[15px]">1 of 1</span>
        <NavIcon label="Next page" d="M2 1 V11 L8 6Z" />
        <NavIcon label="Last page" d="M1 1 V11 L7 6Z" bar={8} />
        <AddPage />
        <button className="relative ml-0.5 flex h-5 w-[83px] items-center pl-4 text-[15px]">
          <svg width="83" height="20" viewBox="0 0 83 20" className="absolute top-0 left-0" aria-hidden="true">
            <path d="M0 0 H73 L82 9 V20 H0Z" fill="#fff" />
            <path d="M73 0 L82 9 V20" fill="none" stroke="#c5c6b8" />
          </svg>
          <span className="relative">Page 1</span>
        </button>
      </div>
      <div className="mr-1 h-3 w-0 border-l-2 border-dotted border-[#c5c5b4]" />
      <button aria-label="Scroll left" className="flex h-[17px] w-[17px] items-center justify-center rounded-sm bg-[#cde6fa]">
        <span className="-rotate-90">
          <Chevron up />
        </span>
      </button>
      <div className="ml-1.5 flex h-[17px] flex-1 items-center justify-center gap-0.5 rounded-sm border-b border-[#a5cfe4] bg-[#cfeaf7]">
        {[0, 1, 2, 3].map((i) => (
          <span key={i} className="h-2 w-px bg-white" />
        ))}
      </div>
      <button aria-label="Scroll right" className="ml-1 flex h-[17px] w-[17px] items-center justify-center rounded-sm bg-[#cde6fa]">
        <span className="rotate-90">
          <Chevron up />
        </span>
      </button>
      <button aria-label="Navigator" className="mr-0.5 ml-0.5 flex w-[17px] justify-center">
        <Icon w={16} h={16}>
          <circle cx="6.500" cy="6.500" r="5" fill="#f4f7fc" stroke="#5a688f" strokeWidth="1.400" />
          <path d="M6.500 3.500 V9.500 M3.500 6.500 H9.500" stroke="#5a688f" />
          <path d="M10.500 10.500 L15 15" stroke="#5a688f" strokeWidth="2.200" />
        </Icon>
      </button>
    </div>
  );
}

/* ---------- workspace ---------- */

function Workspace() {
  return (
    <div className="flex min-h-0 flex-1">
      <Toolbox />
      <div className="flex w-[25px] shrink-0 flex-col">
        <div className="flex h-6 shrink-0 items-center justify-center pt-1">
          <Icon w={16} h={16}>
            <path d="M4 1 V13 M1 5 H15" stroke="#555" strokeDasharray="2 2" />
            <path d="M7 7 L11 11" stroke="#333" strokeWidth="1.200" />
            <path d="M13 9 V13 H9Z" fill="#333" />
          </Icon>
        </div>
        <VerticalRuler />
      </div>
      <div className="flex min-w-0 flex-1 flex-col">
        <HorizontalRuler />
        <div className="flex min-h-0 flex-1">
          <main className="relative min-w-0 flex-1 border-t border-l border-[#c9cabb] bg-white">
            <div className="absolute top-[148px] left-[497px] h-[364px] w-[340px] bg-[#111c1d]" />
            <ColorDocker />
          </main>
          <ScrollColumn />
        </div>
        <PageBar />
      </div>
      <Palette />
    </div>
  );
}

function StatusBar() {
  return (
    <footer className="flex h-[53px] shrink-0 border-t-2 border-white text-[12px]">
      <p className="w-[140px] self-end pb-[5px] pl-1.5 text-[13px] whitespace-pre">( -1.547, 6.013  )</p>
      <p className="flex-1 self-end pb-[5px]">Next click for Drag/Scale; Second click for Rotate/Skew; Dbl-clicking tool selects all objects; Shift+click multi-selects; Alt+click digs</p>
      <div className="mr-[194px] grid grid-cols-[25px_21px] content-center gap-y-[3px]">
        <Icon>
          <BucketShape />
        </Icon>
        <Icon w={21} h={21}>
          <rect x="0.500" y="0.500" width="20" height="20" fill="#fff" stroke="#8b948c" />
          <path d="M1 1 L20 20 M20 1 L1 20" stroke="#333" strokeWidth="1.300" />
        </Icon>
        <Icon>
          <PenShape />
        </Icon>
        <div className="h-[21px] border border-[#8b948c] bg-[#080a08]" />
      </div>
    </footer>
  );
}

/* ---------- taskbar ---------- */

function Monitors({ crossed = false }: { crossed?: boolean }) {
  return (
    <>
      <rect x="6" y="1.500" width="11" height="9" fill="#26389b" stroke="#8fa3d4" />
      <rect x="1.500" y="5.500" width="11" height="9" fill="#2b3fa8" stroke="#8fa3d4" />
      <path d="M3 17 H11 M7 14 V17" stroke="#dde5f0" strokeWidth="2" />
      {crossed && <path d="M10 9 L18 18 M18 9 L10 18" stroke="#e02c40" strokeWidth="2.800" />}
    </>
  );
}

const tray: { name: string; art: React.ReactNode }[] = [
  { name: "Messenger", art: <><circle cx="10" cy="10" r="8" fill="#dde3e5" stroke="#c5cdd0" /><path d="M6 8 H9 M12 8 H15 M7 13 H14" stroke="#6d7578" strokeWidth="1.300" /></> },
  { name: "Network", art: <Monitors /> },
  { name: "Red disc", art: <><circle cx="10" cy="10" r="8.500" fill="#30131a" /><path d="M3 7 Q10 1 17 7 L18 13 Q10 20 2 13Z" fill="#c41f26" /><path d="M1 9 H19 V11.500 H1Z" fill="#3a1218" /><path d="M1 9 H19" stroke="#d89a98" /></> },
  { name: "Network unplugged", art: <Monitors crossed /> },
  { name: "Safely remove hardware", art: <><path d="M3 3 L9 2 L8 5 L13 8 L9 11 L6 7 L3 9Z" fill="#4ec022" stroke="#2c7a1a" /><path d="M8 13 L15 9 L18 13 L10 18Z" fill="#7b8a93" stroke="#36434c" /></> },
  { name: "No signal", art: <><path d="M4 19 V15 M7 19 V14 M10 19 V12 M13 19 V9 M16 19 V6 M19 19 V3" stroke="#d7dfe2" strokeWidth="2.200" /><circle cx="7" cy="7" r="6.500" fill="#e02225" /><path d="M4.500 4.500 L9.500 9.500 M9.500 4.500 L4.500 9.500" stroke="#fff" strokeWidth="2" /></> },
  { name: "Dropbox", art: <><path d="M6 2 L10 5 L14 2 L19 5 L15 8.500 L19 12 L10 17 L2 12 L5.500 8.500 L1 5Z" fill="#c6ecff" stroke="#51a7dd" /><path d="M5.500 8.500 L10 5 L15 8.500 L10 12Z" fill="#58b6ee" /><circle cx="14.500" cy="14" r="5" fill="#40ae2f" /><path d="M12 14 L14 16 L17 12" fill="none" stroke="#fff" strokeWidth="1.600" /></> },
  { name: "G client", art: <><circle cx="10" cy="10" r="8.500" fill="#4468c8" stroke="#7296de" /><path d="M14 7 V5.500 H6.500 V14.500 H14 V10 H10" fill="none" stroke="#e86c38" strokeWidth="2.600" /></> },
  { name: "Search", art: <><path d="M8 12 L2 18" stroke="#2449a8" strokeWidth="3" /><circle cx="12" cy="7.500" r="5.800" fill="#e7f6fd" stroke="#b2cfe4" strokeWidth="1.500" /></> },
  { name: "Second network unplugged", art: <Monitors crossed /> },
  { name: "Monitor", art: <><rect x="1.500" y="3" width="17" height="12" fill="#111d33" stroke="#0e1522" /><path d="M3 11 L6 9 L8 12 L10 6 L12 10 L14 5 L17 8" fill="none" stroke="#c8ecf5" strokeWidth="1.500" /><path d="M6 18 H14 M10 15 V18" stroke="#1a273c" strokeWidth="2" /></> },
  { name: "Antivirus", art: <><rect x="0.500" y="0.500" width="19" height="19" rx="1" fill="#dd1a22" stroke="#b51018" /><path d="M3.500 12 Q4 4 12 4 Q17 6 16.500 12 Q14 9 11 9.500 Q7 9 3.500 12Z" fill="#fff" /><path d="M11 9 L13.500 15.500 Q15 17 16 15" fill="none" stroke="#fff" strokeWidth="1.500" /><path d="M5.500 10 Q7 6 11 6 Q14 7 15 9 Q12.500 7.500 10.500 8 Q8 8 5.500 10Z" fill="#dd1a22" /></> },
  { name: "Security alert", art: <><path d="M10 1 Q14 4 18 3 Q19 14 10 19 Q1 14 2 3 Q6 4 10 1Z" fill="#d62c38" stroke="#dcbcc8" strokeWidth="1.200" /><path d="M7 7 L13 13 M13 7 L7 13" stroke="#fff" strokeWidth="2" /></> },
];

function Taskbar() {
  return (
    <div className="flex h-[35px] shrink-0 bg-linear-to-b from-[#5a9cf8] via-[#3a80fa] via-20% to-[#2a68ee] text-white">
      <button className="flex w-[114px] items-center rounded-r-xl bg-linear-to-b from-[#6cc93c] via-[#3fb41a] via-30% to-[#35a414] pl-3 shadow-[inset_-3px_-2px_4px_#1f7c10]">
        <Icon w={24} h={22}>
          <path d="M4 3 Q8 1 12 3 L10 10 Q6 8 2 10Z" fill="#ef5b25" />
          <path d="M13 4 Q17 6 22 4 L20 11 Q15 13 11 11Z" fill="#7bd036" />
          <path d="M2 11 Q6 9 10 11 L8 18 Q4 16 0 18Z" fill="#4b86ee" />
          <path d="M11 12 Q15 14 20 12 L18 19 Q13 21 9 19Z" fill="#fbd22c" />
        </Icon>
        <span className="ml-1 text-[19px] font-bold italic [text-shadow:1px_1px_2px_#1c5210]">start</span>
      </button>
      <button className="mt-1 mb-1 ml-[11px] flex w-[186px] items-center gap-[3px] rounded-sm bg-linear-to-b from-[#6fb0fb] via-[#4a9bfc] via-20% to-[#4795f8] pl-2.5">
        <Icon>
          <circle cx="10" cy="10" r="9" fill="#e35c14" />
          <circle cx="10.500" cy="8" r="6" fill="#35549f" />
          <path d="M2 5 L5 3 Q6 6 9 6 Q8 9 10 11 Q13 13 16 9 Q16 16 10 16 Q3 15 2 5Z" fill="#f69a22" />
          <path d="M13 2 Q19 6 16 13 Q17 8 13 2Z" fill="#fbc73a" />
        </Icon>
        Blogger: Blog Kardu - ...
      </button>
      <button className="mt-1 mb-1 flex w-[187px] items-center gap-1 rounded-sm bg-[#2060ea] pl-3 shadow-[inset_1px_1px_2px_#123c9e]">
        <CorelLogo />
        CorelDRAW X4 - [Gra...
      </button>
      <div className="flex-1" />
      <div className="flex items-center border-l border-[#1f5cc4] bg-linear-to-b from-[#62d0fa] via-[#3cbcfa] via-20% to-[#40c0fa] pr-[19px]">
        <button aria-label="Show hidden icons" className="-ml-2.5 flex h-[21px] w-[21px] items-center justify-center rounded-full border border-[#a7dcfa] bg-[#5cb8f4]">
          <Icon w={10} h={12}>
            <path d="M7 2 L3 6 L7 10" fill="none" stroke="#fff" strokeWidth="2" />
          </Icon>
        </button>
        <div className="ml-0.5 flex gap-px">
          {tray.map((t) => (
            <button key={t.name} aria-label={t.name}>
              <Icon>{t.art}</Icon>
            </button>
          ))}
        </div>
        <span className="ml-2.5">8:59 AM</span>
      </div>
    </div>
  );
}

export default function App() {
  return (
    <div className="flex h-screen min-h-[899px] flex-col overflow-hidden bg-[#f0f1e0] font-['DejaVu_Sans_Condensed','DejaVu_Sans',sans-serif] text-[13px] leading-[18px] text-[#1c211f]">
      <TitleBar />
      <MenuBar />
      <StandardBar />
      <PropertyBar />
      <Workspace />
      <StatusBar />
      <Taskbar />
    </div>
  );
}
